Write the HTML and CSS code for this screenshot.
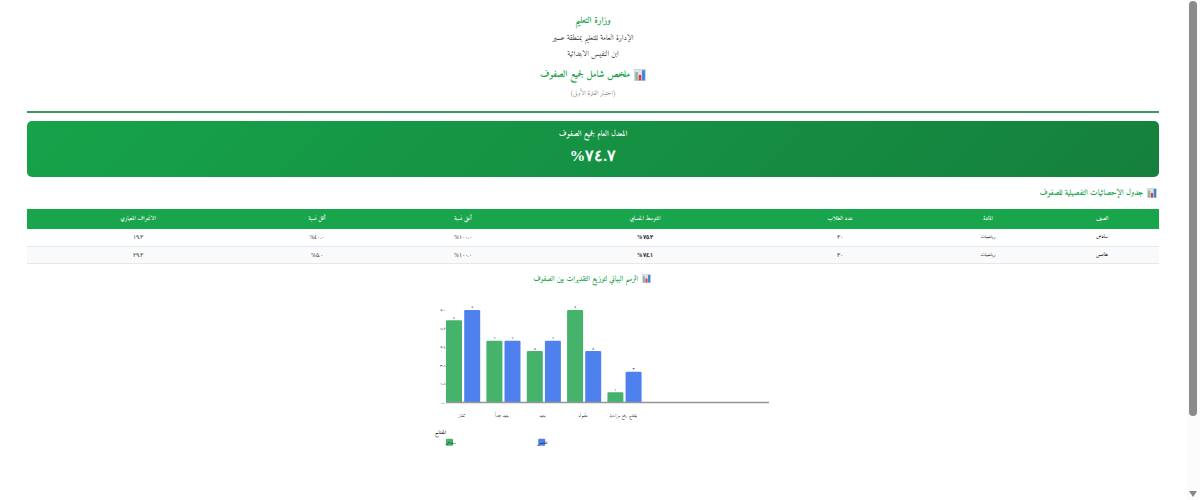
FILE: index.html
```
<!DOCTYPE html>
<html lang="ar" dir="rtl">
<head>
    <meta charset="UTF-8">
    <meta name="viewport" content="width=device-width, initial-scale=1.0">
    <title>ملخص شامل لجميع الصفوف</title>
    <link rel="stylesheet" href="styles.css">
</head>
<body>
    <svg width="0" height="0" class="defs">
        <symbol id="chart-icon" viewBox="0 0 12 12">
            <rect x="0.3" y="0.3" width="11.4" height="11.4" rx="0.8" fill="#dde3e8" stroke="#b5bcc2" stroke-width="0.6"/>
            <rect x="1.3" y="3" width="2.6" height="8.4" fill="#8fb894"/>
            <rect x="4.7" y="6" width="2.6" height="5.4" fill="#d8365c"/>
            <rect x="8.1" y="1.2" width="2.8" height="10.2" fill="#3f83d6"/>
        </symbol>
    </svg>

    <div class="report">
        <header class="header">
            <h1 class="ministry">وزارة التعليم</h1>
            <p class="admin">الإدارة العامة للتعليم بمنطقة عسير</p>
            <p class="school">ابن النفيس الابتدائية</p>
            <h2 class="title"><svg class="icon"><use href="#chart-icon"/></svg><span>ملخص شامل لجميع الصفوف</span></h2>
            <p class="exam">(اختبار الفترة الأولى)</p>
        </header>

        <section class="average">
            <div class="average-label">المعدل العام لجميع الصفوف</div>
            <div class="average-value">٧٤.٧%</div>
        </section>

        <h3 class="section-title"><svg class="icon"><use href="#chart-icon"/></svg><span>جدول الإحصائيات التفصيلية للصفوف</span></h3>
        <table class="stats">
            <colgroup>
                <col class="c-class"><col class="c-subject"><col class="c-count"><col class="c-mean"><col class="c-max"><col class="c-min"><col class="c-dev">
            </colgroup>
            <thead>
                <tr>
                    <th>الصف</th>
                    <th>المادة</th>
                    <th>عدد الطلاب</th>
                    <th>المتوسط الحسابي</th>
                    <th>أعلى نسبة</th>
                    <th>أقل نسبة</th>
                    <th>الانحراف المعياري</th>
                </tr>
            </thead>
            <tbody>
                <tr>
                    <td class="name">سادس</td>
                    <td class="subject">رياضيات</td>
                    <td class="num">٣٠</td>
                    <td class="num mean">٧٥.٢%</td>
                    <td class="num">١٠٠.٠%</td>
                    <td class="num">٤٠.٠%</td>
                    <td class="num">١٩.٣</td>
                </tr>
                <tr>
                    <td class="name">خامس</td>
                    <td class="subject">رياضيات</td>
                    <td class="num">٣٠</td>
                    <td class="num mean">٧٤.١%</td>
                    <td class="num">١٠٠.٠%</td>
                    <td class="num">٥.٠%</td>
                    <td class="num">٢٩.٣</td>
                </tr>
            </tbody>
        </table>

        <h3 class="section-title chart-title"><svg class="icon"><use href="#chart-icon"/></svg><span>الرسم البياني لتوزيع التقديرات بين الصفوف</span></h3>
        <svg class="chart" width="340" height="155" viewBox="430 297 340 155">
            <g class="ticks">
                <text x="443" y="311">٩.٠</text>
                <text x="443" y="329.5">٧.٢</text>
                <text x="443" y="348">٥.٤</text>
                <text x="443" y="366.5">٣.٦</text>
                <text x="443" y="385">١.٨</text>
                <text x="443" y="403.5">٠.٠</text>
            </g>
            <g class="green">
                <rect x="446" y="320.3" width="16" height="82.2" rx="1.2"/>
                <rect x="486.4" y="340.8" width="16" height="61.7" rx="1.2"/>
                <rect x="526.8" y="351.1" width="16" height="51.4" rx="1.2"/>
                <rect x="567.1" y="310" width="16" height="92.5" rx="1.2"/>
                <rect x="607.4" y="392.2" width="16" height="10.3" rx="1.2"/>
            </g>
            <g class="blue">
                <rect x="464.2" y="310" width="16" height="92.5" rx="1.2"/>
                <rect x="504.5" y="340.8" width="16" height="61.7" rx="1.2"/>
                <rect x="544.9" y="340.8" width="16" height="61.7" rx="1.2"/>
                <rect x="585.2" y="351.1" width="16" height="51.4" rx="1.2"/>
                <rect x="625.6" y="371.7" width="16" height="30.8" rx="1.2"/>
            </g>
            <path class="axis" d="M446 402.5H769"/>
            <g class="values">
                <text x="454" y="318.5">٨</text>
                <text x="472.2" y="308">٩</text>
                <text x="494.4" y="339">٦</text>
                <text x="512.5" y="339">٦</text>
                <text x="534.8" y="349.5">٥</text>
                <text x="552.9" y="339">٦</text>
                <text x="575.1" y="308">٩</text>
                <text x="593.2" y="349.5">٥</text>
                <text x="615.4" y="390.5">١</text>
                <text x="633.6" y="370">٣</text>
            </g>
            <g class="labels">
                <text x="462" y="416.5">ممتاز</text>
                <text x="502" y="416.5">جيد جداً</text>
                <text x="542.5" y="416.5">جيد</text>
                <text x="583" y="416.5">مقبول</text>
                <text x="623.5" y="416.5">يحتاج رفع مزاحمة</text>
            </g>
            <text class="legend-title" x="440.5" y="433.5">المفتاح</text>
            <rect class="key green" x="446" y="438.8" width="7" height="7" rx="1"/>
            <text class="legend" x="450.5" y="443.5">سادس</text>
            <rect class="key blue" x="538.2" y="438.8" width="7" height="7" rx="1"/>
            <text class="legend" x="542.5" y="443.5">خامس</text>
        </svg>
    </div>

    <div class="scrollbar">
        <div class="thumb"></div>
        <div class="arrow"></div>
    </div>
</body>
</html>
```
FILE: styles.css
```
* {
    box-sizing: border-box;
}
body {
    margin: 0;
    height: 500px;
    overflow: hidden;
    background-color: #fff;
    font-family: "Amiri", "Noto Naskh Arabic", "Liberation Serif", serif;
    color: #333;
}
h1, h2, h3, p {
    margin: 0;
}
.defs {
    position: absolute;
}
.report {
    width: 1132px;
    margin-right: 41px;
}
.header {
    height: 113px;
    padding-top: 12px;
    border-bottom: 2px solid #3a9b62;
    text-align: center;
}
.ministry {
    height: 18px;
    line-height: 18px;
    font-size: 9.3px;
    color: #16a34a;
}
.admin, .school {
    height: 16px;
    line-height: 16px;
    font-size: 7.7px;
}
.title {
    display: flex;
    justify-content: center;
    align-items: center;
    gap: 4px;
    height: 25px;
    padding-left: 2px;
    font-size: 9.7px;
    color: #16a34a;
}
.title, .chart-title {
    padding-right: 2px;
}
.icon {
    flex: none;
    width: 12px;
    height: 12px;
}
.exam {
    height: 13px;
    line-height: 13px;
    font-size: 6.4px;
    color: #777;
}
.average {
    height: 56px;
    margin-top: 8px;
    padding-top: 5px;
    border-radius: 5px;
    background: linear-gradient(135deg, #16a34a, #15803d);
    color: #fff;
    text-align: center;
}
.average-label {
    height: 16px;
    line-height: 16px;
    font-size: 8px;
    font-weight: bold;
}
.average-value {
    height: 28px;
    line-height: 28px;
    font-family: "Liberation Serif", serif;
    font-size: 15.5px;
    font-weight: bold;
    letter-spacing: 0.8px;
}
.section-title {
    display: flex;
    align-items: center;
    gap: 4px;
    height: 16px;
    margin-top: 8px;
    padding-right: 2px;
    font-size: 8.2px;
    color: #16a34a;
}
.section-title .icon {
    width: 10px;
    height: 10px;
}
.stats {
    width: 100%;
    margin-top: 8px;
    border-collapse: collapse;
    table-layout: fixed;
    text-align: center;
    font-size: 6px;
    line-height: 8px;
}
.stats th, .stats td {
    padding: 0;
}
.stats th {
    height: 20px;
    background-color: #18a54b;
    color: #fff;
}
.stats td {
    height: 17px;
    border-bottom: 1px solid #e5e7eb;
}
.stats tbody tr:last-child {
    background-color: #f9fafb;
}
.c-class { width: 114px; }
.c-subject { width: 114px; }
.c-count { width: 182px; }
.c-mean { width: 208px; }
.c-max { width: 156px; }
.c-min { width: 136px; }
.c-dev { width: 222px; }
.num {
    font-family: "Liberation Serif", serif;
    font-size: 5.5px;
    letter-spacing: 0.3px;
}
.stats .subject {
    font-size: 5px;
    color: #111;
}
.name, .mean {
    font-weight: bold;
    color: #111;
}
.stats .name {
    font-size: 5.4px;
    color: #000;
}
.chart-title {
    justify-content: center;
    margin-top: 7px;
    padding: 0 2px 0 0;
    font-size: 7.6px;
}
.chart-title .icon {
    width: 9px;
    height: 9px;
}
.chart {
    display: block;
    margin: 10px 389px 0 0;
}
.chart text {
    text-anchor: middle;
    fill: #222;
    font-size: 4.8px;
}
.chart .ticks text, .chart .values text {
    font-size: 4px;
}
.green {
    fill: #45b36c;
}
.blue {
    fill: #4f81ee;
}
.axis {
    stroke: #969696;
    stroke-width: 1.4;
}
.chart .legend-title {
    font-size: 5.4px;
    font-weight: bold;
}
.scrollbar {
    position: absolute;
    top: 0;
    right: 0;
    width: 13px;
    height: 500px;
    background-color: #fcfcfc;
}
.thumb {
    width: 8px;
    height: 415px;
    margin: 1px 3px 0 0;
    border-radius: 4px;
    background-color: #8b8b8b;
}
.arrow {
    width: 0;
    margin: 75px 3px 0 0;
    border: 4px solid transparent;
    border-top: 6px solid #858585;
    border-bottom: 0;
}
```
